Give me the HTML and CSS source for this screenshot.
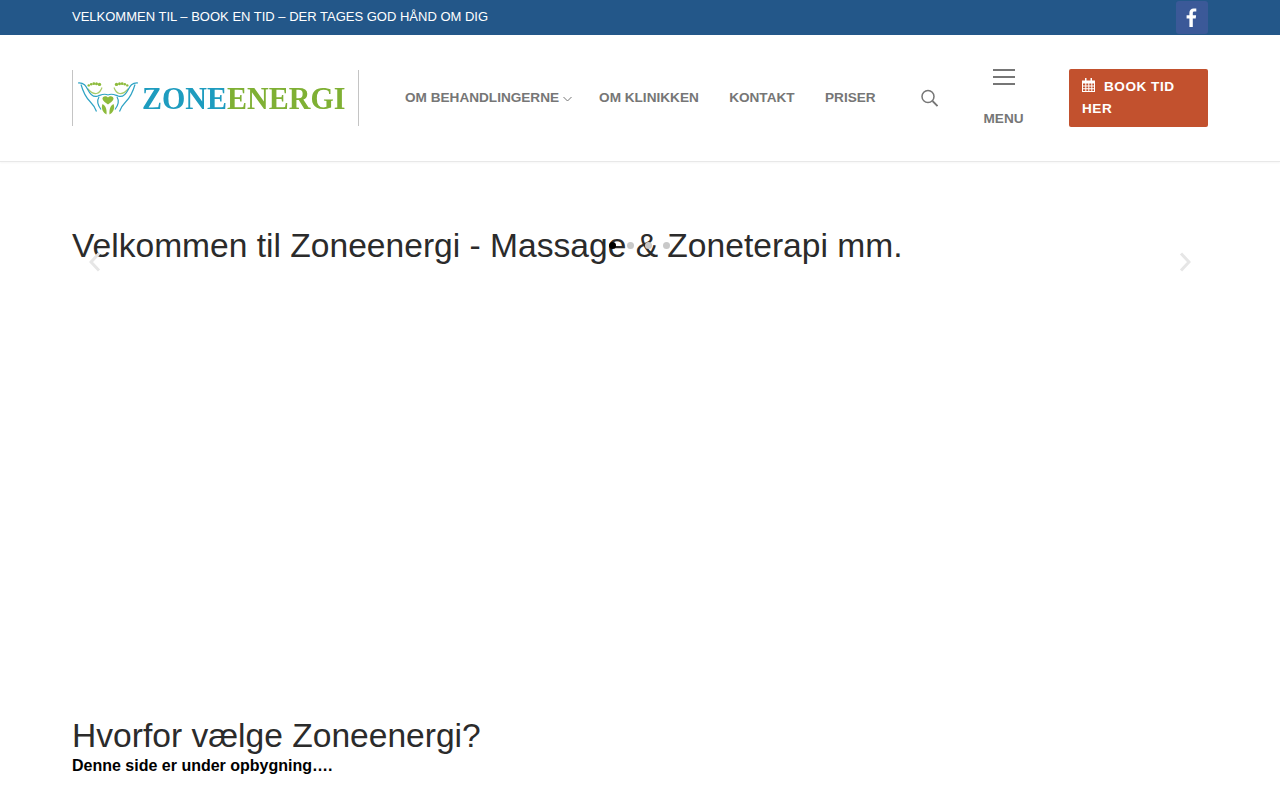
FILE: index.html
```html
<!DOCTYPE html>
<html lang="da">
<head>
<meta charset="utf-8">
<title>Zoneenergi</title>
<link rel="stylesheet" href="styles.css">
</head>
<body>
<div class="topbar">
  <div class="container topbar-row">
    <span class="topbar-text">VELKOMMEN TIL – BOOK EN TID – DER TAGES GOD HÅND OM DIG</span>
    <a class="fb" href="#" aria-label="Facebook">
      <svg width="12" height="19" viewBox="0 0 12 19"><path d="M3.4 19V10.6H.6V7.3h2.8V4.9C3.4 2 5.1.4 7.7.4c1.2 0 2.3.1 2.6.1v2.9H8.500c-1.400 0-1.700.7-1.700 1.600v2.300h3.300l-.4 3.300H6.800V19z" fill="#fff"/></svg>
    </a>
  </div>
</div>
<header class="header">
  <div class="container header-row">
    <a class="logo" href="#">
      <svg class="logo-mark" width="61" height="34" viewBox="0 0 61 34">
        <g fill="#8dbb3c">
          <circle cx="10.700" cy="3.400" r="1.200"/><circle cx="13.200" cy="2.200" r="1.300"/><circle cx="15.800" cy="1.700" r="1.400"/><circle cx="18.500" cy="1.700" r="1.500"/><circle cx="21.500" cy="2.400" r="1.700"/>
          <circle cx="38.500" cy="2.400" r="1.700"/><circle cx="41.500" cy="1.700" r="1.500"/><circle cx="44.200" cy="1.700" r="1.400"/><circle cx="46.800" cy="2.200" r="1.300"/><circle cx="49.300" cy="3.400" r="1.200"/>
          <path d="M30 15.500c-2-2.500-6-1.200-5.500 1.500.4 2.300 3.500 3.800 5.500 5.500 2-1.700 5.100-3.200 5.500-5.500.5-2.700-3.500-4-5.500-1.500z"/>
          <path d="M24.500 22c3 1.500 4.500 5 4 10.500-3-1.500-6-5.500-4-10.500z"/>
          <path d="M35.500 22c-3 1.500-4.500 5-4 10.500 3-1.500 6-5.500 4-10.500z"/>
        </g>
        <g fill="none" stroke="#a9cc6a" stroke-width="1.200">
          <path d="M9.500 6.500c2.500 3 6 5.500 9 5 2.500-.5 4.500-3 5.500-6"/>
          <path d="M50.500 6.500c-2.500 3-6 5.500-9 5-2.500-.5-4.500-3-5.500-6"/>
        </g>
        <g fill="none" stroke="#2fa3c4" stroke-width="1.200">
          <path d="M0 1c6-.5 8 3 10 7 2.500 5 6 7.500 10 6 3-1 6-3 10-1"/>
          <path d="M60 1c-6-.5-8 3-10 7-2.500 5-6 7.500-10 6-3-1-6-3-10-1"/>
          <path d="M3 2.500c2 7 5 13 9 17 3 3 5 6 6.500 10"/>
          <path d="M57 2.500c-2 7-5 13-9 17-3 3-5 6-6.500 10"/>
          <path d="M21 15c-2.500 4-1 8.500 2 12.500"/>
          <path d="M39 15c2.500 4 1 8.500-2 12.500"/>
        </g>
      </svg>
      <span class="logo-text"><span class="logo-blue">ZONE</span><span class="logo-green">ENERGI</span></span>
    </a>
    <nav class="nav">
      <a class="nav-link nav-first" href="#">OM BEHANDLINGERNE<svg class="chev" width="9" height="6" viewBox="0 0 9 6"><path d="M.5 1l4 4 4-4" fill="none" stroke="#767676"/></svg></a>
      <a class="nav-link" href="#">OM KLINIKKEN</a>
      <a class="nav-link" href="#">KONTAKT</a>
      <a class="nav-link" href="#">PRISER</a>
    </nav>
    <a class="search" href="#" aria-label="Søg">
      <svg width="17" height="18" viewBox="0 0 17 18"><circle cx="7" cy="7.500" r="6" fill="none" stroke="#767676" stroke-width="1.500"/><path d="M11.500 12l5 5" stroke="#767676" stroke-width="1.800"/></svg>
    </a>
    <a class="menu" href="#">
      <span class="burger"><i></i><i></i><i></i></span>
      <span class="menu-label">MENU</span>
    </a>
    <a class="book" href="#">
      <svg class="cal" width="13" height="14" viewBox="0 0 13 14"><path d="M0 2.500h13V14H0zM1 5.500v1.900h2.300V5.500zm3.300 0v1.900h2V5.500zm3 0v1.900h2V5.500zm3 0v1.900H12V5.500zM1 8.400v1.900h2.300V8.400zm3.300 0v1.900h2V8.400zm3 0v1.900h2V8.400zm3 0v1.900H12V8.400zM1 11.300V13h2.300v-1.700zm3.300 0V13h2v-1.700zm3 0V13h2v-1.700zm3 0V13H12v-1.700z" fill="#fff" fill-rule="evenodd"/><path d="M3 0h1.500v3.500H3zM8.500 0H10v3.500H8.500z" fill="#fff"/></svg>BOOK TID HER
    </a>
  </div>
</header>
<main class="container">
  <section class="slider">
    <h1 class="title">Velkommen til Zoneenergi - Massage &amp; Zoneterapi mm.</h1>
    <div class="dots"><i class="dot dot-on"></i><i class="dot"></i><i class="dot"></i><i class="dot"></i></div>
    <svg class="arrow arrow-prev" width="12" height="20" viewBox="0 0 12 20"><path d="M10 1.500L2 10l8 8.500" fill="none" stroke="#e6e6e6" stroke-width="3"/></svg>
    <svg class="arrow arrow-next" width="12" height="20" viewBox="0 0 12 20"><path d="M2 1.500L10 10l-8 8.500" fill="none" stroke="#e6e6e6" stroke-width="3"/></svg>
  </section>
  <h2 class="subtitle">Hvorfor vælge Zoneenergi?</h2>
  <p class="note">Denne side er under opbygning….</p>
</main>
</body>
</html>
```
FILE: styles.css
```css
* { box-sizing: border-box; }
html, body { margin: 0; padding: 0; }
body { font-family: "Liberation Sans", Arial, sans-serif; background: #fff; color: #000; overflow: hidden; }
a { text-decoration: none; color: inherit; }
.container { width: 1136px; margin: 0 auto; }

.topbar { background: #235789; height: 35px; }
.topbar-row { display: flex; justify-content: space-between; align-items: center; height: 35px; }
.topbar-text { color: #fff; font-size: 13px; margin-bottom: 2px; }
.fb { width: 32px; height: 33px; background: #3b5998; border-radius: 3px; display: flex; align-items: center; justify-content: center; }

.header { height: 127px; border-bottom: 1px solid #e8e8e8; box-shadow: 0 1px 2px rgba(0,0,0,.04); }
.header-row { display: flex; align-items: center; height: 126px; }
.logo { width: 287px; height: 56px; border-left: 1px solid #c4c4c4; border-right: 1px solid #c4c4c4; display: flex; align-items: center; padding-left: 5px; flex: none; }
.logo-mark { flex: none; margin-top: 2px; filter: blur(.3px); }
.logo-text { display: inline-block; font-family: "Liberation Serif", serif; font-weight: 700; font-size: 30px; margin-left: 3px; letter-spacing: 0; line-height: 1; filter: blur(.3px); transform: scaleY(1.06); }
.logo-blue { color: #1e9cbf; }
.logo-green { color: #7fb034; }

.nav { display: flex; align-items: center; margin-left: 46px; padding-bottom: 2px; }
.nav-link { font-size: 13.600px; font-weight: 700; color: #767676; margin-right: 30.400px; white-space: nowrap; }
.nav-first { margin-right: 27px; }
.chev { margin-left: 4px; vertical-align: 0; }
.search { margin-left: 15px; display: flex; width: 17px; flex: none; }
.menu { margin-left: 45px; width: 41px; display: flex; flex-direction: column; align-items: center; flex: none; height: 58px; }
.burger { width: 22px; display: flex; flex-direction: column; gap: 5px; margin-left: 1px; }
.burger i { display: block; height: 2px; background: #767676; }
.menu-label { font-size: 13.600px; font-weight: 700; color: #767676; margin-top: 26px; }
.book { margin-left: 45px; width: 139px; height: 58px; background: #c2512e; color: #fff; border-radius: 2px; font-size: 13.600px; font-weight: 700; letter-spacing: .5px; line-height: 22px; padding: 7px 13px; flex: none; }
.cal { margin-right: 9px; vertical-align: -1px; }

.slider { position: relative; height: 536px; padding-top: 64px; }
.title { margin: 0; font-size: 33.600px; font-weight: 400; color: #2b2b2b; line-height: 40px; }
.dots { position: absolute; left: 537px; top: 80px; display: flex; gap: 11px; }
.dot { width: 7px; height: 7px; border-radius: 50%; background: #c9c9c9; }
.dot-on { background: #000; }
.arrow { position: absolute; top: 90px; }
.arrow-prev { left: 17px; }
.arrow-next { right: 17px; }
.subtitle { margin: 18px 0 0; font-size: 33.600px; font-weight: 400; color: #2b2b2b; line-height: 40px; }
.note { margin: 0; font-size: 16px; font-weight: 700; line-height: 20px; }
```
